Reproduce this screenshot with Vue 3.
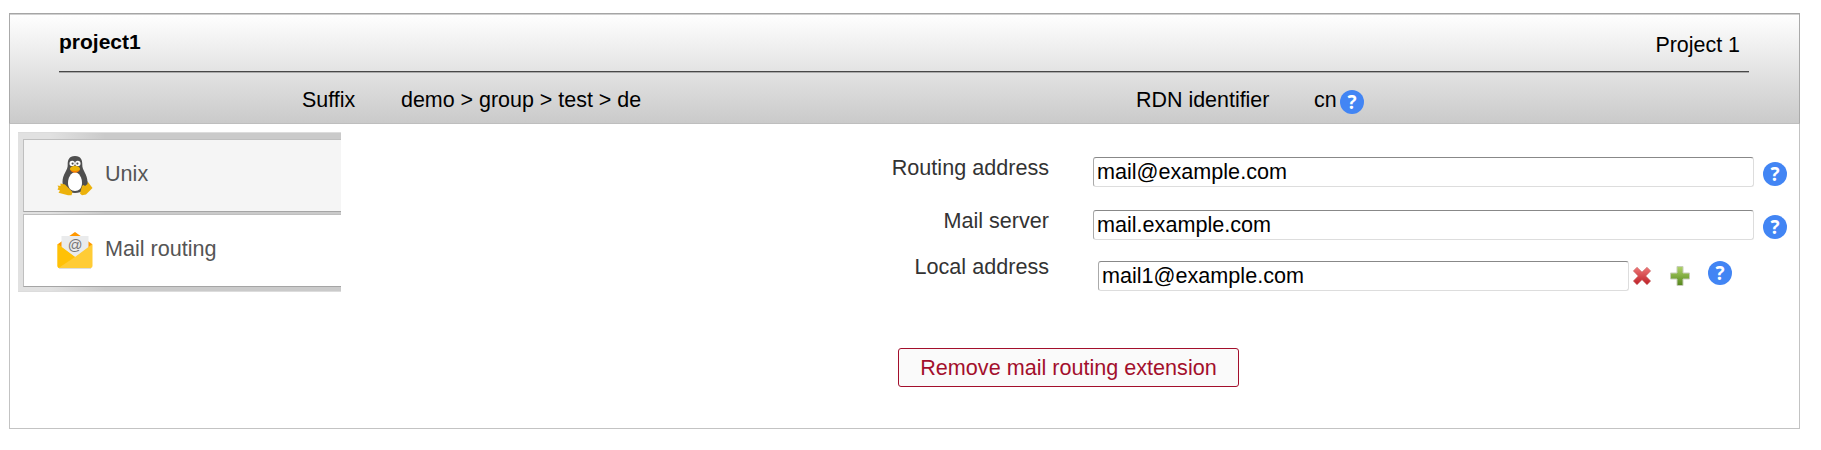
<script setup>
import { ref } from 'vue'

const routingAddress = ref('mail@example.com')
const mailServer = ref('mail.example.com')
const localAddress = ref('mail1@example.com')
</script>

<template>
  <main class="account">
    <header class="head">
      <div class="title-row">
        <strong class="name">project1</strong>
        <span class="type">Project 1</span>
      </div>
      <div class="meta-row">
        <span class="suffix-label">Suffix</span>
        <span class="suffix">demo &gt; group &gt; test &gt; de</span>
        <span class="rdn-label">RDN identifier</span>
        <span class="rdn">cn</span>
        <span class="help">?</span>
      </div>
    </header>

    <div class="body">
      <nav class="tabs">
        <a class="tab idle">
          <svg class="tab-icon" width="36" height="40" viewBox="0 0 36 40">
            <path d="M18 0C12 0 10.5 4 10.7 9C11 14 5.5 18 5.500 26C5.500 33 11 37 18 37C25 37 30.500 33 30.500 26C30.500 18 25 14 25.300 9C25.500 4 24 0 18 0Z" fill="#4f4f4f" />
            <path d="M18 16C14 17 11 21 11 27C11 32 14 35 18 35C22 35 25 32 25 27C25 21 22 17 18 16Z" fill="#fff" />
            <circle cx="15.200" cy="7.400" r="2.700" fill="#fff" />
            <circle cx="20.800" cy="7.400" r="2.700" fill="#fff" />
            <circle cx="15.600" cy="7.600" r="1.100" fill="#4f4f4f" />
            <circle cx="20.400" cy="7.600" r="1.100" fill="#4f4f4f" />
            <path d="M13 13C14 18 22 18 23 13Z" fill="#f57c00" />
            <path d="M12.800 13C14 8.800 22 8.800 23.200 13C22 15.500 14 15.500 12.800 13Z" fill="#eab308" />
            <path d="M3.500 27.500L8 28.500L15.500 36L14.500 39.200H11L1.500 36.800L3 34.500L.5 33.500L1.500 31.500L.5 29.500L3.500 30Z" fill="#ecb20c" />
            <path d="M25 30L31 26L35.500 32L29 38.500L25 39.300L23 37.500Z" fill="#ecb20c" />
            <path d="M26 24L30.500 25.500L30.500 28L28 30L26 28.500Z" fill="#4f4f4f" />
          </svg>
          <span>Unix</span>
        </a>
        <a class="tab">
          <svg class="tab-icon" width="36" height="38" viewBox="0 0 36 38">
            <path d="M18 0L35 12V17H1V12Z" fill="#ff9800" />
            <path d="M2 35H34V37H2Z" fill="#ddd" />
            <path d="M4.500 4H31.500V23L18 29L4.500 23Z" fill="#eaebec" />
            <text x="18" y="17.500" text-anchor="middle" font-size="14.500" fill="#777">@</text>
            <path d="M.5 12L18 25L35.500 12V34Q35.500 36 33.500 36H2.500Q.5 36 .5 34Z" fill="#ffcc36" />
            <path d="M.5 12L18 25L1.500 36Q.5 35 .5 34Z" fill="#ffc107" />
          </svg>
          <span>Mail routing</span>
        </a>
      </nav>

      <section class="form">
        <div class="row first">
          <label>Routing address</label>
          <input v-model="routingAddress" class="wide">
          <span class="help">?</span>
        </div>
        <div class="row second">
          <label>Mail server</label>
          <input v-model="mailServer" class="wide">
          <span class="help">?</span>
        </div>
        <div class="row third">
          <label>Local address</label>
          <input v-model="localAddress" class="short">
          <svg class="delete" width="20" height="20" viewBox="0 0 20 20">
            <defs>
              <linearGradient id="red" x1="0" y1="0" x2="0" y2="1">
                <stop offset="0" stop-color="#ee7777" />
                <stop offset="1" stop-color="#bd1f26" />
              </linearGradient>
            </defs>
            <path d="M5 1.200L10 6.100L15 1.200L18.700 4.900L13.800 10L18.700 15L15 18.800L10 13.800L5 18.800L1.300 15L6.200 10L1.300 4.900Z" fill="url(#red)" stroke="#c76d6d" stroke-width=".6" />
          </svg>
          <svg class="add" width="20" height="20" viewBox="0 0 20 20">
            <defs>
              <linearGradient id="green" x1="0" y1="0" x2="0" y2="1">
                <stop offset="0" stop-color="#b0d468" />
                <stop offset="1" stop-color="#55861d" />
              </linearGradient>
            </defs>
            <path d="M7 .5H13V7H19.500V13H13V19.500H7V13H.5V7H7Z" fill="url(#green)" stroke="#c7cdb9" />
          </svg>
          <span class="help">?</span>
        </div>
        <button class="remove" type="button">Remove mail routing extension</button>
      </section>
    </div>
  </main>
</template>

<style>
body { background: #fff; }
</style>

<style scoped>
.account {
  box-sizing: border-box;
  width: 1791px;
  height: 416px;
  margin: 13px 0 0 9px;
  border: 1px solid #c3c3c3;
  border-top: 0;
  background: #fff;
  font: 21.6px/24px "Liberation Sans", Arial, sans-serif;
  color: #000;
}
.account, .account * { box-sizing: border-box; }
.head {
  height: 111px;
  margin: 0 -1px;
  padding: 0 50px 0 49px;
  border: 1px solid #aaa;
  border-top-color: #a5a5a5;
  border-bottom-color: #bebebe;
  background: linear-gradient(#fff, #cacaca);
  box-shadow: inset 0 1px #d0d0d0;
  font-size: 21.45px;
}
.title-row {
  display: flex;
  justify-content: space-between;
  height: 58px;
  padding: 16px 9px 0 0;
  border-bottom: 1px solid #484848;
  box-shadow: 0 1px #aaa;
}
.name { font-size: 21px; }
.type { margin-top: 3px; }
.meta-row { display: flex; height: 50px; padding-top: 16px; }
.suffix-label { width: 99px; margin-left: 243px; }
.suffix { width: 735px; }
.rdn-label { width: 178px; }
.rdn { width: 26px; }
.help {
  flex: none;
  width: 24px;
  height: 24px;
  border-radius: 50%;
  background: #4285f4;
  color: #fff;
  font: bold 19px/25px "Open Sans", sans-serif;
  text-align: center;
}
.meta-row .help { margin-top: 2px; }
.body { display: flex; align-items: flex-start; }
.tabs {
  width: 323px;
  height: 160px;
  margin: 8px 0 0 8px;
  padding: 6px 0 4px 5px;
  border: solid #dcdcdc;
  border-width: 1px 0;
  background: linear-gradient(90deg, #e1e1e1 0, #e1e1e1 10%, #cacaca 27%);
}
.tab {
  display: flex;
  height: 73px;
  margin-bottom: 2px;
  padding-left: 33px;
  border: 1px solid #bfbfbf;
  border-right: 0;
  border-bottom-color: #a5a5a5;
  background: #fff;
  color: #555;
}
.tab.idle { background: #f5f5f5; }
.tab-icon { flex: none; margin: 16px 12px 0 0; }
.tab:last-child .tab-icon { margin-top: 17px; }
.tab span { margin-top: 22px; }
.form { width: 1458px; }
.row { display: flex; height: 53px; }
.row label { width: 708px; text-align: right; color: #333; }
.first { margin-top: 32px; }
.third { height: 87px; }
.third label { margin-top: -7px; }
input {
  height: 30px;
  margin: 1px 9px 0 44px;
  padding: 1px 3px;
  border: 1px solid #ddd;
  border-top-color: #888;
  border-left-color: #aaa;
  border-radius: 3px;
  outline: 0;
  background: #fff;
  color: #000;
  font: inherit;
}
.wide { width: 661px; }
.short { width: 531px; margin: -1px 0 0 49px; }
.row .help { margin-top: 6px; }
.third .delete { margin: 4px 0 0 3px; }
.third .add { margin: 4px 0 0 18px; }
.third .help { margin: -1px 0 0 18px; }
.remove {
  display: block;
  width: 341px;
  height: 39px;
  margin: -1px 0 0 557px;
  padding: 0;
  border: 1px solid #a30f2c;
  border-radius: 3px;
  background: #fafafa;
  color: #a30f2c;
  font: inherit;
}
</style>
